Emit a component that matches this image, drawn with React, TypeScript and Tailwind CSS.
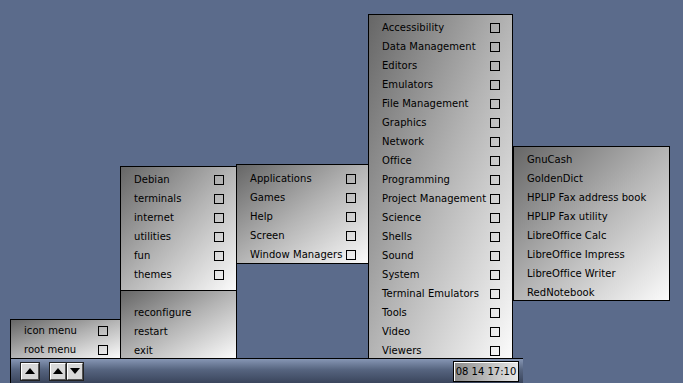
import React from "react";

type MenuProps = {
  items: string[];
  box: string;
  checks?: boolean;
  pad?: string;
};

const FONT = { fontFamily: '"DejaVu Sans", "Liberation Sans", sans-serif' };

function Menu({ items, box, checks = true, pad = "pt-[3px]" }: MenuProps) {
  return (
    <div
      className={`absolute border border-black bg-[linear-gradient(to_bottom_right,#666666,#b4b4b4_50%,#fbfbfb)] ${box} ${pad}`}
    >
      {items.map((label) => (
        <div key={label} className="flex items-center h-[19px] pl-[13px] pr-[12px]">
          <span className="text-[10px] tracking-[0.05px] text-black leading-none whitespace-nowrap">{label}</span>
          {checks && <span className="w-[10px] h-[10px] border border-black shrink-0 ml-auto" />}
        </div>
      ))}
    </div>
  );
}

function Arrow({ up = true }: { up?: boolean }) {
  return (
    <svg width="10" height="6" viewBox="0 0 10 6">
      {up ? <polygon points="5,0 10,6 0,6" fill="black" /> : <polygon points="0,0 10,0 5,6" fill="black" />}
    </svg>
  );
}

function TaskButton({ children, w = "w-[18px]" }: { children: React.ReactNode; w?: string }) {
  return (
    <div className={`${w} h-[17px] flex items-center justify-center bg-[#d8d8d8] border border-t-white border-l-white border-r-[#555] border-b-[#555] shadow-[0_0_0_1px_#222]`}>
      {children}
    </div>
  );
}

export default function App() {
  return (
    <div className="relative w-[683px] h-[383px] overflow-hidden bg-[#5b6b8b]" style={FONT}>
      {/* big categories menu */}
      <Menu
        box="left-[368px] top-[14px] w-[145px] h-[345px]"
        pad="pt-[3px]"
        items={[
          "Accessibility", "Data Management", "Editors", "Emulators", "File Management",
          "Graphics", "Network", "Office", "Programming", "Project Management", "Science",
          "Shells", "Sound", "System", "Terminal Emulators", "Tools", "Video", "Viewers",
        ]}
      />

      {/* office submenu */}
      <Menu
        box="left-[513px] top-[146px] w-[157px] h-[155px]"
        checks={false}
        pad="pt-[3px]"
        items={[
          "GnuCash", "GoldenDict", "HPLIP Fax address book", "HPLIP Fax utility",
          "LibreOffice Calc", "LibreOffice Impress", "LibreOffice Writer", "RedNotebook",
        ]}
      />

      {/* applications menu */}
      <Menu
        box="left-[236px] top-[164px] w-[133px] h-[100px]"
        pad="pt-[4px]"
        items={["Applications", "Games", "Help", "Screen", "Window Managers"]}
      />

      {/* debian menu */}
      <Menu
        box="left-[120px] top-[166px] w-[117px] h-[125px]"
        pad="pt-[3px]"
        items={["Debian", "terminals", "internet", "utilities", "fun", "themes"]}
      />

      {/* wm menu */}
      <Menu
        box="left-[120px] top-[290px] w-[117px] h-[69px]"
        checks={false}
        pad="pt-[12px]"
        items={["reconfigure", "restart", "exit"]}
      />

      {/* left menu */}
      <Menu
        box="left-[10px] top-[319px] w-[111px] h-[40px]"
        pad="pt-[1px]"
        items={["icon menu", "root menu"]}
      />

      {/* taskbar */}
      <div className="absolute left-[10px] top-[358px] w-[513px] h-[25px] border-t border-l border-black bg-[linear-gradient(to_bottom,#8696b4,#56647f_45%,#3a455c)] flex items-center">
        <div className="ml-[10px]">
          <TaskButton>
            <Arrow />
          </TaskButton>
        </div>
        <div className="ml-[11px] flex gap-[1px]">
          <TaskButton w="w-[16px]">
            <Arrow />
          </TaskButton>
          <TaskButton w="w-[16px]">
            <Arrow up={false} />
          </TaskButton>
        </div>
        <div className="ml-auto mr-[4px] w-[66px] h-[21px] border border-black bg-[linear-gradient(to_right,#8a8a8a,#e8e8e8)] flex items-center justify-center shadow-[inset_1px_1px_0_#ffffff]">
          <span className="text-[10px] text-black whitespace-nowrap">08 14 17:10</span>
        </div>
      </div>
    </div>
  );
}
